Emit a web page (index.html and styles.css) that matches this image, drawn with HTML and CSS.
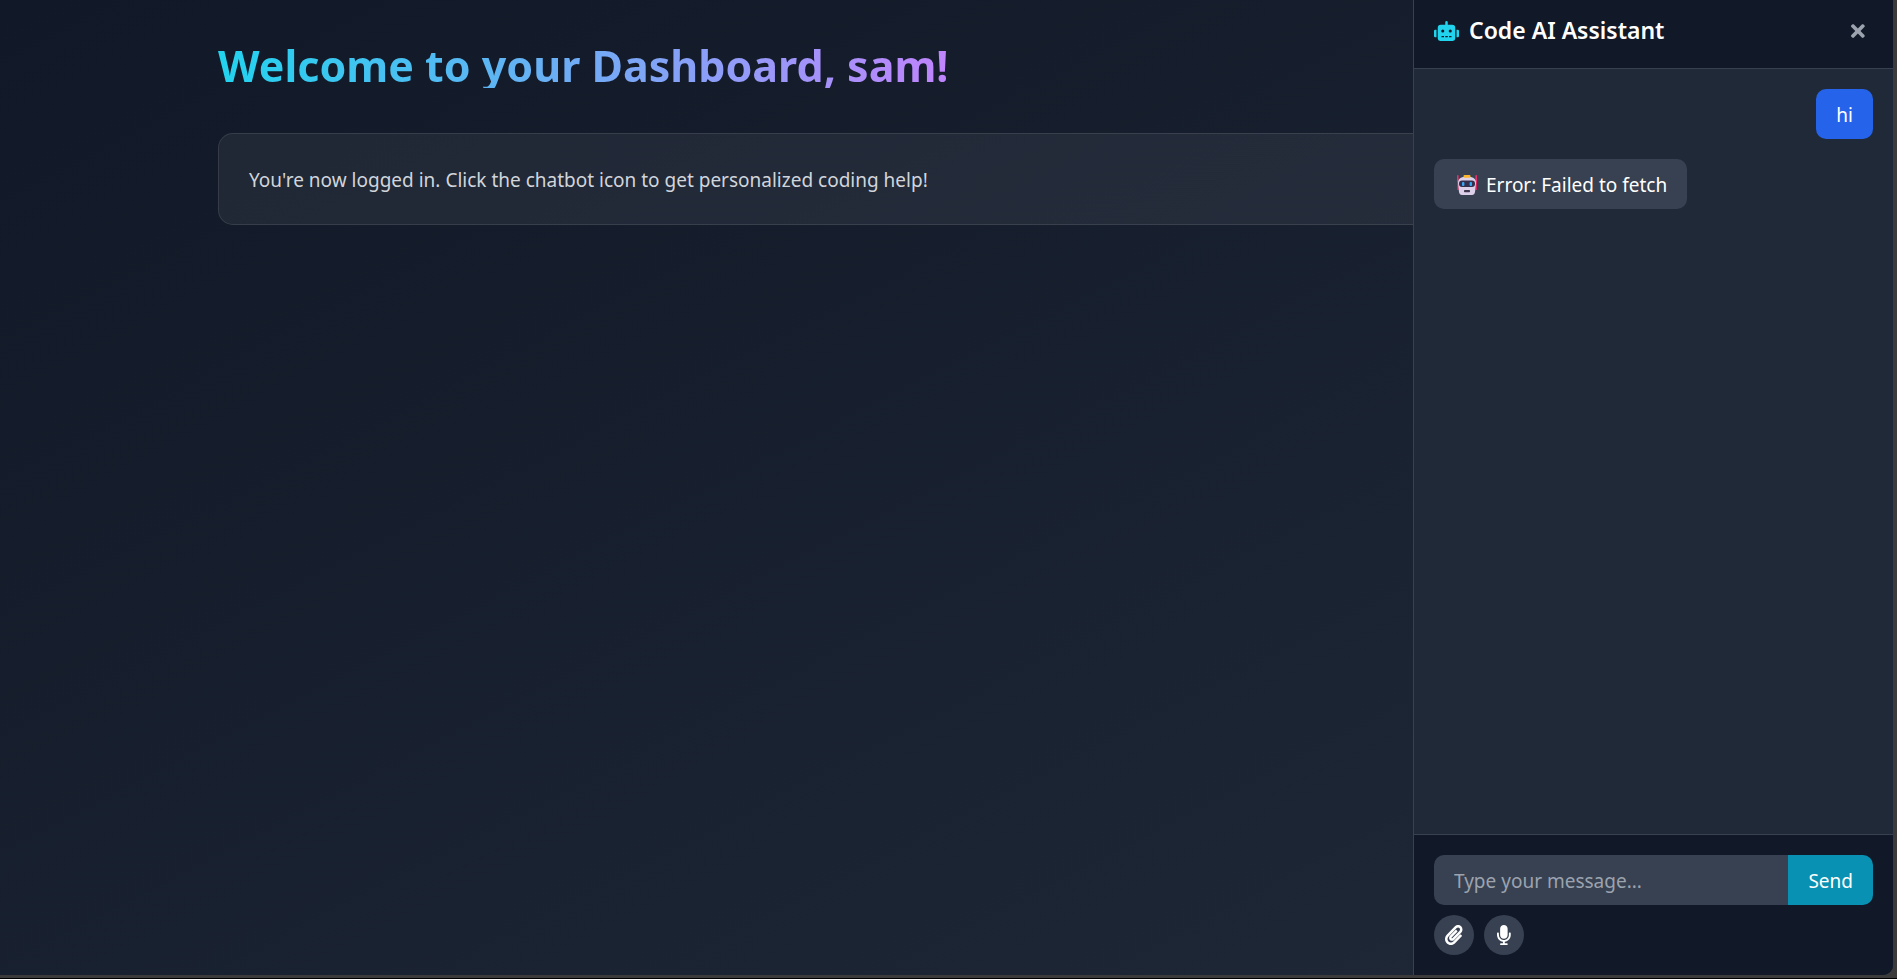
FILE: index.html
```html
<!DOCTYPE html>
<html lang="en">
<head>
<meta charset="utf-8">
<title>Dashboard</title>
<link rel="stylesheet" href="styles.css">
</head>
<body>
<div class="window">
  <main class="dashboard">
    <div class="container">
      <h1 class="welcome">Welcome to your Dashboard, sam!</h1>
      <section class="card">
        <p class="card-text">You're now logged in. Click the chatbot icon to get personalized coding help!</p>
      </section>
    </div>
  </main>
  <aside class="chat" aria-label="Code AI Assistant">
    <header class="chat-header">
      <h2 class="chat-title">
        <svg class="robot" viewBox="0 0 640 512" aria-hidden="true"><path d="M32,224H64V416H32A31.96,31.96,0,0,1,0,384V256A31.96,31.96,0,0,1,32,224Zm512-48V448a64.06,64.06,0,0,1-64,64H160a64.06,64.06,0,0,1-64-64V176a79.97,79.97,0,0,1,80-80H288V32a32,32,0,0,1,64,0V96H464A79.97,79.97,0,0,1,544,176ZM264,256a40,40,0,1,0-40,40A40,40,0,0,0,264,256Zm-8,128H192v32h64Zm96,0H288v32h64ZM456,256a40,40,0,1,0-40,40A40,40,0,0,0,456,256Zm-8,128H384v32h64ZM640,256V384a31.96,31.96,0,0,1-32,32H576V224h32A31.96,31.96,0,0,1,640,256Z"/></svg>
        Code AI Assistant
      </h2>
      <button class="close" type="button" aria-label="Close">
        <svg class="icon" viewBox="0 0 352 512" aria-hidden="true"><path d="M242.72 256l100.07-100.07c12.28-12.28 12.28-32.19 0-44.48l-22.24-22.24c-12.28-12.28-32.19-12.28-44.48 0L176 189.28 75.93 89.21c-12.28-12.28-32.19-12.28-44.48 0L9.21 111.45c-12.28 12.28-12.28 32.19 0 44.48L109.28 256 9.21 356.07c-12.28 12.28-12.28 32.19 0 44.48l22.24 22.24c12.28 12.28 32.2 12.28 44.48 0L176 322.72l100.07 100.07c12.28 12.28 32.2 12.28 44.48 0l22.24-22.24c12.28-12.28 12.28-32.19 0-44.48L242.72 256z"/></svg>
      </button>
    </header>
    <div class="messages">
      <p class="bubble bubble-user">hi</p>
      <p class="bubble bubble-bot">
        <svg class="bot-emoji" viewBox="0 0 22 22" aria-hidden="true">
          <rect x="1" y="1" width="1.6" height="15" rx=".8" fill="#e8306a"/>
          <rect x="19.4" y="1" width="1.6" height="15" rx=".8" fill="#e8306a"/>
          <rect x="1.4" y="8" width="3" height="8" rx="1" fill="#c91f55"/>
          <rect x="17.6" y="8" width="3" height="8" rx="1" fill="#c91f55"/>
          <path d="M7 3h8q5 1 5 6l-1 9q-.5 3-3 3H6q-2.500 0-3-3L2 9q0-5 5-6z" fill="#ddd0ea"/>
          <rect x="7.500" y="1" width="7" height="2.800" rx="1" fill="#fbb62d"/>
          <rect x="3" y="6.500" width="16" height="6.500" rx="3" fill="#36304f"/>
          <rect x="6" y="8" width="2.400" height="4" rx="1" fill="#35a8f5"/>
          <rect x="13.600" y="8" width="2.400" height="4" rx="1" fill="#35a8f5"/>
          <rect x="8" y="16" width="6" height="2.200" rx=".8" fill="#40384e"/>
        </svg>
        Error: Failed to fetch
      </p>
    </div>
    <form class="composer">
      <div class="input-row">
        <input class="message-input" type="text" placeholder="Type your message..." aria-label="Message">
        <button class="send" type="button">Send</button>
      </div>
      <div class="tools">
        <button class="tool" type="button" aria-label="Attach file">
          <svg class="icon" viewBox="0 0 448 512" aria-hidden="true"><path d="M43.246 466.142c-58.43-60.289-57.341-157.511 1.386-217.581L254.392 34c44.316-45.332 116.351-45.336 160.671 0 43.89 44.894 43.943 117.329 0 162.276L232.214 383.128c-29.855 30.537-78.633 30.111-107.982-.998-28.275-29.97-27.368-77.473 1.452-106.953l143.743-146.835c6.182-6.314 16.312-6.422 22.626-.241l22.861 22.379c6.315 6.182 6.422 16.312.241 22.626L171.427 319.927c-4.932 5.045-5.236 13.428-.648 18.292 4.372 4.634 11.245 4.711 15.688.165l182.849-186.851c19.613-20.062 19.613-52.725-.011-72.798-19.189-19.627-49.957-19.637-69.154 0L90.39 293.295c-34.763 35.56-35.299 93.12-1.191 128.313 34.01 35.093 88.985 35.137 123.058.286l172.06-175.999c6.177-6.319 16.307-6.433 22.626-.256l22.877 22.364c6.319 6.177 6.434 16.307.256 22.626l-172.06 175.998c-59.576 60.938-155.943 60.216-214.77-.485z"/></svg>
        </button>
        <button class="tool" type="button" aria-label="Record voice">
          <svg class="icon" viewBox="0 0 352 512" aria-hidden="true"><path d="M176 352c53.02 0 96-42.98 96-96V96c0-53.02-42.98-96-96-96S80 42.98 80 96v160c0 53.02 42.98 96 96 96zm160-160h-16c-8.84 0-16 7.16-16 16v48c0 74.8-64.49 134.82-140.79 127.38C96.71 376.89 48 317.11 48 250.3V208c0-8.84-7.16-16-16-16H16c-8.84 0-16 7.16-16 16v40.16c0 89.64 63.97 169.55 152 181.69V464H96c-8.84 0-16 7.16-16 16v16c0 8.84 7.16 16 16 16h160c8.84 0 16-7.16 16-16v-16c0-8.84-7.16-16-16-16h-56v-33.77C285.71 418.47 352 344.9 352 256v-48c0-8.84-7.16-16-16-16z"/></svg>
        </button>
      </div>
    </form>
  </aside>
</div>
</body>
</html>
```
FILE: styles.css
```css
* {
  box-sizing: border-box;
  margin: 0;
}

body {
  height: 100vh;
  padding: 0 4px 3px 0;
  border-bottom: 1px solid #000;
  background: #3b3b3b;
  color: #fff;
  font: 19px/30px "Segoe UI", "Noto Sans", "Open Sans", sans-serif;
}

button,
input {
  border: 0;
  padding: 0;
  color: inherit;
  font: inherit;
}

.window {
  position: relative;
  height: 100%;
  overflow: hidden;
  border-radius: 0 0 10px 0;
  background: linear-gradient(to bottom right, #111827, #1f2937);
}

.dashboard {
  padding: 38px 40px;
}

.container {
  max-width: 1457px;
  margin: 0 auto;
}

/* The gradient box is shorter than the line, so descenders are cut */
.welcome {
  width: fit-content;
  height: 50px;
  margin-bottom: 45px;
  background: linear-gradient(to right, #22d3ee, #c084fc);
  background-clip: text;
  -webkit-background-clip: text;
  color: transparent;
  font-size: 43px;
  font-weight: 700;
  line-height: 56px;
}

.card {
  padding: 31px 30px 29px;
  border: 1px solid rgba(255, 255, 255, 0.1);
  border-radius: 15px;
  background: linear-gradient(to right, rgba(255, 255, 255, 0.06), rgba(255, 225, 245, 0.06));
}

.card-text {
  color: #d1d5db;
}

/* Chat drawer lies over the dashboard */
.chat {
  position: absolute;
  top: 0;
  right: 0;
  bottom: 0;
  display: flex;
  flex-direction: column;
  width: 480px;
  max-width: 100%;
  border-left: 1px solid #374151;
  background: #1f2937;
}

.chat-header {
  display: flex;
  align-items: center;
  justify-content: space-between;
  padding: 13px 28px 20px 20px;
  border-bottom: 1px solid #374151;
  background: #111827;
}

.chat-title {
  display: flex;
  align-items: center;
  gap: 10px;
  font-size: 23px;
  font-weight: 600;
  line-height: 35px;
}

.robot {
  width: 25px;
  height: 20px;
  fill: #22d3ee;
}

.icon {
  display: block;
  height: 20px;
  fill: currentColor;
}

.close {
  background: none;
  color: #9ca3af;
}

.messages {
  flex: 1;
  display: flex;
  flex-direction: column;
  gap: 20px;
  padding: 20px;
}

.bubble {
  display: flex;
  align-items: center;
  gap: 6px;
  padding: 11px 20px 9px;
  border-radius: 10px;
}

.bubble-user {
  align-self: flex-end;
  background: #2563eb;
}

.bubble-bot {
  align-self: flex-start;
  background: #374151;
}

.bot-emoji {
  width: 26px;
  height: 22px;
}

.composer {
  padding: 20px;
  border-top: 1px solid #374151;
  background: #111827;
}

.input-row {
  display: flex;
}

.message-input {
  flex: 1;
  min-width: 0;
  height: 50px;
  padding: 11px 20px 9px;
  border-radius: 10px 0 0 10px;
  background: #374151;
}

.message-input::placeholder {
  color: #9ca3af;
}

.send {
  padding: 11px 20px 9px;
  border-radius: 0 10px 10px 0;
  background: #0891b2;
}

.tools {
  display: flex;
  gap: 10px;
  margin-top: 10px;
}

.tool {
  display: grid;
  place-items: center;
  width: 40px;
  height: 40px;
  border-radius: 50%;
  background: #374151;
}
```
